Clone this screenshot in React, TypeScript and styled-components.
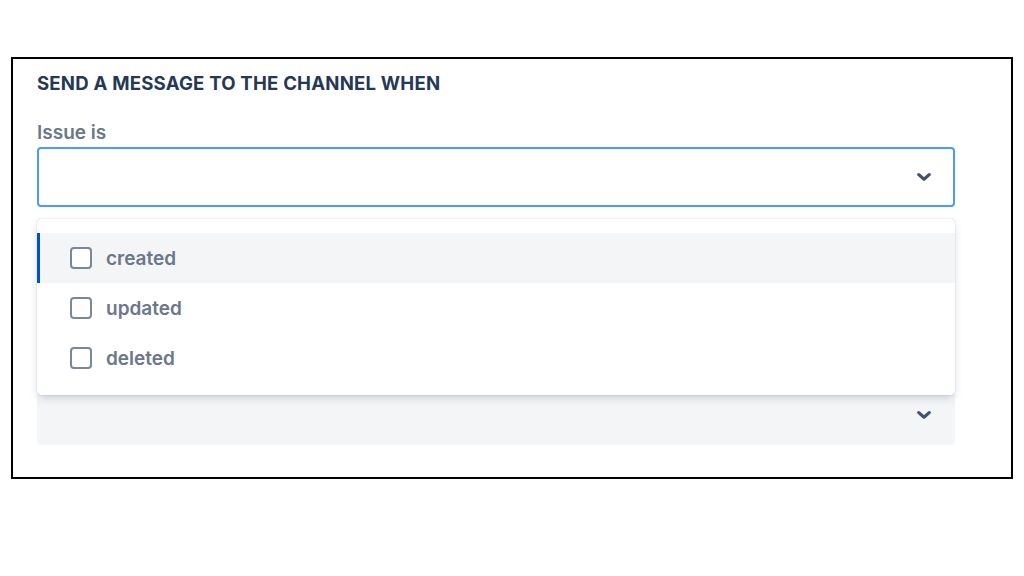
import React from "react";
import styled, { createGlobalStyle } from "styled-components";

const Global = createGlobalStyle`
  html, body { margin: 0; padding: 0; background: #fff; }
  body { font-family: Inter, "Noto Sans", "Liberation Sans", sans-serif; }
  * { box-sizing: border-box; }
`;

const Page = styled.div`
  width: 1024px;
  height: 576px;
  padding: 57px 11px 0 11px;
`;

const Frame = styled.div`
  width: 1002px;
  height: 422px;
  border: 2px solid #000;
  padding: 12px 56px 0 24px;
  display: flex;
  flex-direction: column;
`;

const Heading = styled.h2`
  margin: 0;
  font-size: 18.6px;
  line-height: 24px;
  font-weight: 700;
  letter-spacing: 0.2px;
  color: #253858;
  text-transform: uppercase;
`;

const Label = styled.label`
  margin-top: 26px;
  font-size: 19px;
  line-height: 24px;
  font-weight: 600;
  color: #6b778c;
`;

const Field = styled.div<{ $gap: number }>`
  position: relative;
  margin-top: ${(p) => p.$gap}px;
`;

const SelectBox = styled.div<{ $focused?: boolean }>`
  height: ${(p) => (p.$focused ? 60 : 61)}px;
  border-radius: 4px;
  border: 2px solid ${(p) => (p.$focused ? "#4c9aff" : "#f4f5f7")};
  background: ${(p) => (p.$focused ? "#fff" : "#f4f5f7")};
  display: flex;
  align-items: center;
  justify-content: flex-end;
  padding-right: 22px;
  color: #42526e;
`;

const Menu = styled.div`
  position: absolute;
  left: 0;
  right: 0;
  top: 72px;
  background: #fff;
  border-radius: 4px;
  padding: 14px 0 12px;
  box-shadow: 0 4px 10px -2px rgba(9, 30, 66, 0.22), 0 0 1px rgba(9, 30, 66, 0.35);
  z-index: 2;
`;

const Option = styled.div<{ $active?: boolean }>`
  height: 50px;
  display: flex;
  align-items: center;
  gap: 14px;
  padding-left: 33px;
  background: ${(p) => (p.$active ? "#f4f5f7" : "transparent")};
  box-shadow: ${(p) => (p.$active ? "inset 3px 0 0 #0052cc" : "none")};
  font-size: 19px;
  font-weight: 600;
  color: #6b778c;
`;

const Box = styled.span`
  width: 22px;
  height: 22px;
  border: 2px solid #7a869a;
  border-radius: 4px;
  background: #fff;
  flex: none;
`;

const Chevron = () => (
  <svg width="14" height="10" viewBox="0 0 14 10" aria-hidden>
    <path d="M1.8 2.6 L7 7.2 L12.2 2.6" fill="none" stroke="currentColor" strokeWidth="3.2" strokeLinecap="round" strokeLinejoin="round" />
  </svg>
);

const options = ["created", "updated", "deleted"];

export default function App() {
  return (
    <Page>
      <Global />
      <Frame>
        <Heading>Send a message to the channel when</Heading>
        <Label>Issue is</Label>
        <Field $gap={2}>
          <SelectBox $focused>
            <Chevron />
          </SelectBox>
          <Menu>
            {options.map((o, i) => (
              <Option key={o} $active={i === 0}>
                <Box />
                {o}
              </Option>
            ))}
          </Menu>
        </Field>
        <Field $gap={177}>
          <SelectBox>
            <Chevron />
          </SelectBox>
        </Field>
      </Frame>
    </Page>
  );
}
